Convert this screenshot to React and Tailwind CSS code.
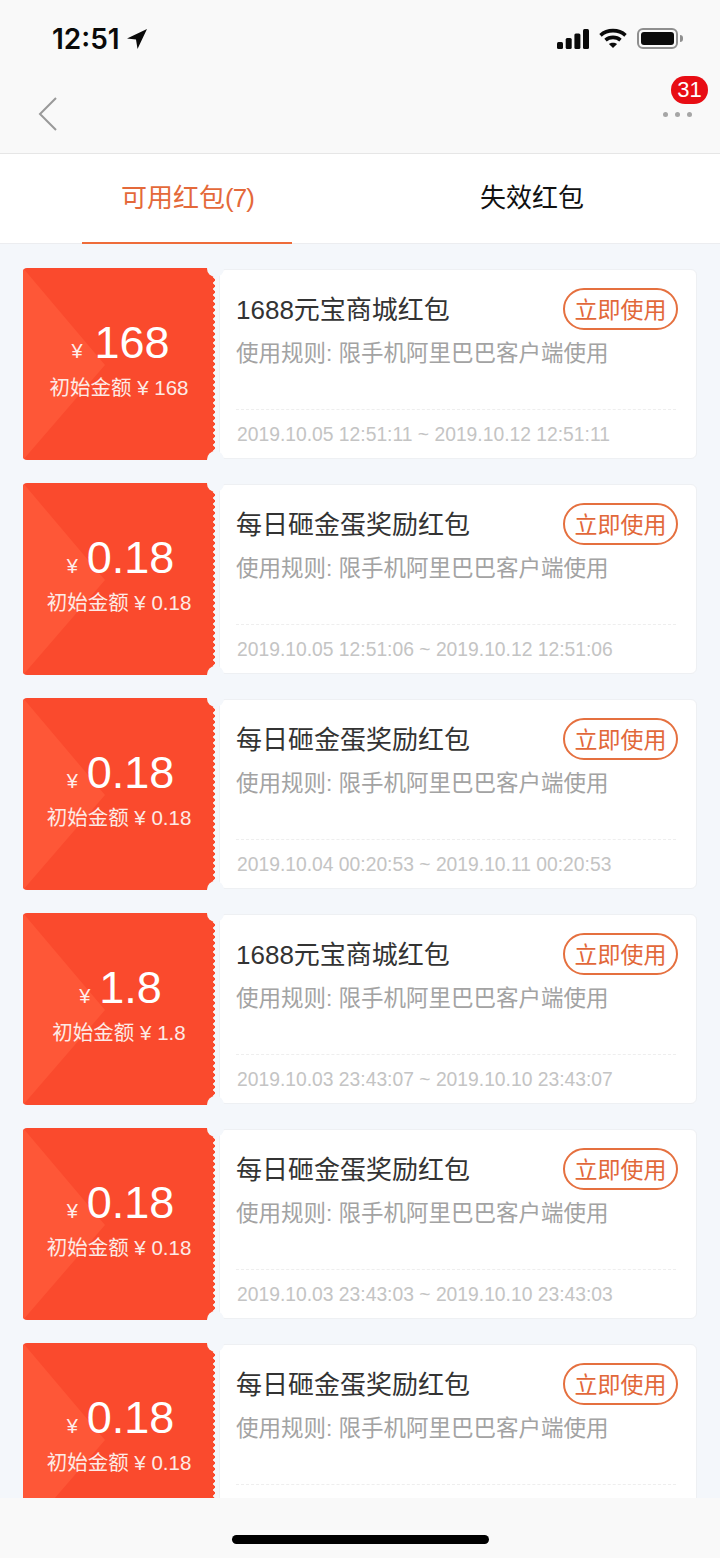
const cards = [
  { big: "168", orig: "168", title: "1688元宝商城红包", date: "2019.10.05 12:51:11 ~ 2019.10.12 12:51:11", wide: true },
  { big: "0.18", orig: "0.18", title: "每日砸金蛋奖励红包", date: "2019.10.05 12:51:06 ~ 2019.10.12 12:51:06" },
  { big: "0.18", orig: "0.18", title: "每日砸金蛋奖励红包", date: "2019.10.04 00:20:53 ~ 2019.10.11 00:20:53" },
  { big: "1.8", orig: "1.8", title: "1688元宝商城红包", date: "2019.10.03 23:43:07 ~ 2019.10.10 23:43:07" },
  { big: "0.18", orig: "0.18", title: "每日砸金蛋奖励红包", date: "2019.10.03 23:43:03 ~ 2019.10.10 23:43:03" },
  { big: "0.18", orig: "0.18", title: "每日砸金蛋奖励红包", date: "" },
];

function Card({ c }) {
  return (
    <div className="relative flex h-[192px] shrink-0 mx-[23px] w-[674px]">
      <div className="relative w-[192px] h-full rounded-l-[4px] bg-[#fa4a2d] overflow-hidden flex flex-col items-center text-white">
        <svg className="absolute inset-0" width="192" height="192" viewBox="0 0 192 192">
          <polygon points="0,0 82,97 0,192" fill="#fe5737" />
        </svg>
        <div className="absolute -right-[2px] top-0 bottom-0 w-[4px] bg-[radial-gradient(circle,#f4f7fb_1.5px,transparent_2px)] bg-[length:4px_6px]" />
        <div className={`relative flex items-baseline mt-[49px] h-[52px] leading-[52px] ml-[3px] ${c.wide ? "gap-[12px]" : "gap-[9px]"}`}>
          <span className="text-[20px] opacity-90">¥</span>
          <span className="text-[45px]">{c.big}</span>
        </div>
        <div className="relative mt-[5px] text-[20.5px] leading-[28px] whitespace-nowrap text-[#fdeae6]">初始金额 ¥ {c.orig}</div>
      </div>
      <div className="ml-[4px] my-px flex-1 bg-white rounded-[6px] border border-[#eef0f3] pl-[16px] pr-[18px] flex flex-col">
        <div className="flex justify-between items-start pt-[18px] h-[63px]">
          <div className="text-[26px] leading-[44px] text-[#333333] whitespace-nowrap">{c.title}</div>
          <div className="w-[115px] h-[42px] rounded-full border-2 border-[#e5703f] text-[#e2683a] text-[23px] leading-[40px] text-center whitespace-nowrap">立即使用</div>
        </div>
        <div className="text-[22.5px] leading-[32px] text-[#a3a3a3] whitespace-nowrap mt-[5px]">使用规则: 限手机阿里巴巴客户端使用</div>
        <div className="mt-[39px] mr-[2px] border-t border-dashed border-[#eeeeee]" />
        <div className="mt-[13px] ml-[1px] text-[19.3px] leading-[24px] text-[#c4c4c4] whitespace-nowrap">{c.date}</div>
      </div>
      <div className="absolute left-[184px] -top-[8px] w-[17px] h-[17px] rounded-full bg-[#f4f7fb]" />
      <div className="absolute left-[184px] -bottom-[8px] w-[17px] h-[17px] rounded-full bg-[#f4f7fb]" />
    </div>
  );
}

export default function App() {
  return (
    <div className="w-[720px] h-[1558px] flex flex-col overflow-hidden bg-[#f4f7fb] font-['Liberation_Sans','Noto_Sans_CJK_SC',sans-serif]">
      <header className="relative z-10 h-[154px] shrink-0 bg-[#f9f9f9] border-b border-[#e6e6e6] flex flex-col">
        <div className="h-[70px] pt-[20px] pl-[52px] pr-[37px] flex justify-between items-start">
          <div className="flex items-center gap-[7px] text-[28px] leading-[38px] font-semibold text-[#0a0a0a]">
            <span className="font-['Inter',sans-serif]">12:51</span>
            <svg width="20" height="20" viewBox="0 0 20 20"><path d="M20 0 0 9.5l9 1L10.5 20z" fill="#0a0a0a" /></svg>
          </div>
          <div className="flex items-center pt-[8px]">
            <svg className="mr-[10px]" width="32" height="20" viewBox="0 0 32 20" fill="#0a0a0a">
              <rect x="0" y="13" width="6" height="7" rx="1.5" />
              <rect x="8.7" y="9" width="6" height="11" rx="1.5" />
              <rect x="17.4" y="4.5" width="6" height="15.5" rx="1.5" />
              <rect x="26" y="0" width="6" height="20" rx="1.5" />
            </svg>
            <svg className="mr-[10px]" width="28" height="21" viewBox="0 0 28 20" fill="none" stroke="#0a0a0a" strokeWidth="3.6">
              <path d="M1.5 6.8C8.5.6 19.5.6 26.5 6.8" />
              <path d="M6.5 11.6c4.2-3.6 10.8-3.6 15 0" />
              <path d="M14 19.5 9.9 15.6c2.4-1.9 5.8-1.9 8.2 0z" fill="#0a0a0a" stroke="none" />
            </svg>
            <div className="flex items-center gap-[2px]">
              <div className="w-[41px] h-[21px] rounded-[6px] border-2 border-[#8f8f8f] p-[2px]">
                <div className="w-full h-full rounded-[3px] bg-[#0a0a0a]" />
              </div>
              <div className="w-[3px] h-[7px] rounded-r-full bg-[#8f8f8f]" />
            </div>
          </div>
        </div>
        <div className="relative flex-1 flex items-center justify-between pl-[38px] pr-[28px]">
          <svg className="mt-[4px]" width="20" height="34" viewBox="0 0 20 34" fill="none" stroke="#999999" strokeWidth="2">
            <path d="M18 1 2 17l16 16" />
          </svg>
          <div className="flex gap-[7px] mt-[6px]">
            <span className="w-[5px] h-[5px] rounded-full bg-[#a6a6a6]" />
            <span className="w-[5px] h-[5px] rounded-full bg-[#a6a6a6]" />
            <span className="w-[5px] h-[5px] rounded-full bg-[#a6a6a6]" />
          </div>
          <div className="absolute left-[671px] top-[6px] w-[37px] h-[28px] rounded-full bg-[#e80d14] text-white text-[22px] leading-[28px] text-center">31</div>
        </div>
      </header>

      <nav className="h-[90px] shrink-0 bg-white border-b border-[#ecedf0] flex text-[26px]">
        <div className="relative w-[374px] flex justify-center pt-[24px]">
          <span className="text-[#e4693a] leading-[40px] ml-[1px] whitespace-nowrap">可用红包<span className="tracking-[-1px]">(7)</span></span>
          <div className="absolute left-[82px] bottom-[-1px] w-[210px] h-[2px] bg-[#ee6c3a]" />
        </div>
        <div className="flex-1 flex justify-center pt-[24px] pr-[30px]">
          <span className="text-[#111111] leading-[40px]">失效红包</span>
        </div>
      </nav>

      <main className="flex-1 min-h-0 overflow-hidden pt-[24px] flex flex-col gap-[23px]">
        {cards.map((c, i) => (
          <Card key={i} c={c} />
        ))}
      </main>

      <footer className="h-[60px] shrink-0 bg-[#f9f9f9] flex justify-center pt-[37px]">
        <div className="w-[257px] h-[9px] rounded-full bg-black" />
      </footer>
    </div>
  );
}
